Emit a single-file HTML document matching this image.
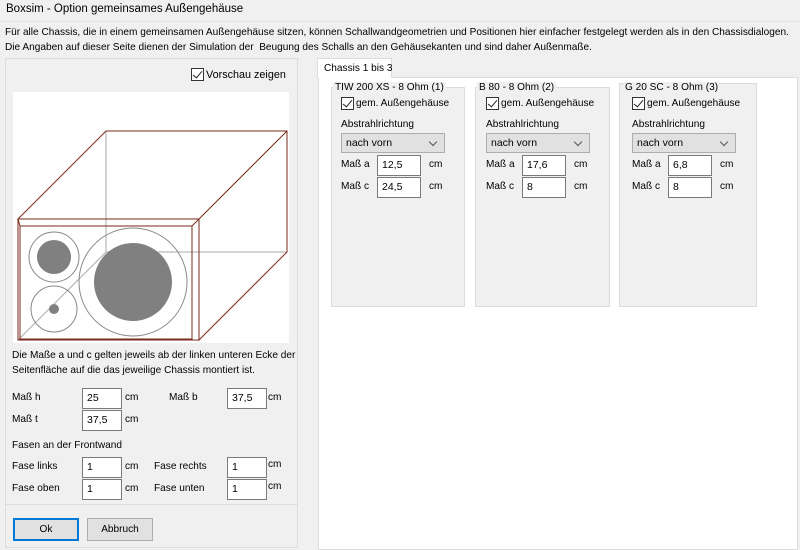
<!DOCTYPE html>
<html><head><meta charset="utf-8"><style>
*{box-sizing:border-box;margin:0;padding:0}
body{width:800px;height:550px;background:#f0f0f0;font-family:"Liberation Sans",sans-serif;font-size:10.1px;color:#000;position:relative;overflow:hidden}
.a{position:absolute;white-space:nowrap}
.in{position:absolute;background:#fff;border:1px solid #7a7a7a;height:21px;padding:3px 4px;font-size:10.5px}
.cb{position:absolute;width:13px;height:13px;border:1px solid #333;background:#fff}
.cb:after{content:"";position:absolute;left:3px;top:0px;width:4px;height:8px;border:solid #222;border-width:0 1.5px 1.5px 0;transform:rotate(40deg)}
.grp{position:absolute;border:1px solid #dcdcdc;background:#f0f0f0}
.sel{position:absolute;background:#e1e1e1;border:1px solid #adadad;height:20px;padding:3px 4px;width:104px;font-size:10.5px}
.sel:after{content:"";position:absolute;right:8px;top:5px;width:5px;height:5px;border:solid #555;border-width:0 1px 1px 0;transform:rotate(45deg)}
.btn{position:absolute;background:#e1e1e1;border:1px solid #adadad;height:23px;text-align:center;line-height:21px}
</style></head><body>
<div class="a" style="left:6px;top:3px;font-size:11.5px">Boxsim - Option gemeinsames Außengehäuse</div>
<div style="position:absolute;left:0;top:21px;width:800px;height:1px;background:#e3e3e3"></div>
<div class="a" style="left:5px;top:27px">Für alle Chassis, die in einem gemeinsamen Außengehäuse sitzen, können Schallwandgeometrien und Positionen hier einfacher festgelegt werden als in den Chassisdialogen.</div>
<div class="a" style="left:5px;top:42px">Die Angaben auf dieser Seite dienen der Simulation der &nbsp;Beugung des Schalls an den Gehäusekanten und sind daher Außenmaße.</div>

<div style="position:absolute;left:5px;top:58px;width:293px;height:447px;border:1px solid #dcdcdc"></div>
<div style="position:absolute;left:5px;top:505px;width:293px;height:43px;border:1px solid #dcdcdc;border-top:none"></div>
<div class="cb" style="left:191px;top:68px"></div>
<div class="a" style="left:206px;top:69px;font-size:10.8px">Vorschau zeigen</div>
<svg style="position:absolute;left:13px;top:92px" width="276" height="251" viewBox="13 92 276 251">
<rect x="13" y="92" width="276" height="251" fill="#fff"/>
<g stroke="#aaa" stroke-width="1" fill="none">
<line x1="106" y1="131" x2="106" y2="252"/><line x1="106" y1="252" x2="287" y2="252"/><line x1="106" y1="252" x2="18" y2="340"/>
</g>
<g stroke="#7a2a1e" stroke-width="1" fill="none">
<polygon points="106,131 287,131 287,252 199,340 199,219 18,219"/>
<line x1="199" y1="219" x2="287" y2="131"/>
<rect x="18" y="219" width="181" height="121"/>
<rect x="20" y="226" width="172" height="113"/>
<line x1="18" y1="219" x2="20" y2="226"/><line x1="199" y1="219" x2="192" y2="226"/>
</g>
<g stroke="#888" fill="none"><circle cx="54" cy="257" r="25"/><circle cx="54" cy="309" r="23"/><circle cx="133" cy="282" r="54"/></g>
<g fill="#808080"><circle cx="54" cy="257" r="17"/><circle cx="54" cy="309" r="5"/><circle cx="133" cy="282" r="39"/></g>
</svg>
<div class="a" style="left:12px;top:350px">Die Maße a und c gelten jeweils ab der linken unteren Ecke der</div>
<div class="a" style="left:12px;top:365px">Seitenfläche auf die das jeweilige Chassis montiert ist.</div>
<div class="a" style="left:12px;top:392px">Maß h</div><div class="in" style="left:82px;top:388px;width:40px">25</div><div class="a" style="left:125px;top:392px">cm</div>
<div class="a" style="left:169px;top:392px">Maß b</div><div class="in" style="left:227px;top:388px;width:40px">37,5</div><div class="a" style="left:268px;top:392px">cm</div>
<div class="a" style="left:12px;top:414px">Maß t</div><div class="in" style="left:82px;top:410px;width:40px">37,5</div><div class="a" style="left:125px;top:414px">cm</div>
<div class="a" style="left:12px;top:440px">Fasen an der Frontwand</div>
<div class="a" style="left:12px;top:461px">Fase links</div><div class="in" style="left:82px;top:457px;width:40px">1</div><div class="a" style="left:125px;top:461px">cm</div>
<div class="a" style="left:154px;top:461px">Fase rechts</div><div class="in" style="left:227px;top:457px;width:40px">1</div><div class="a" style="left:268px;top:459px">cm</div>
<div class="a" style="left:12px;top:483px">Fase oben</div><div class="in" style="left:82px;top:479px;width:40px">1</div><div class="a" style="left:125px;top:483px">cm</div>
<div class="a" style="left:154px;top:483px">Fase unten</div><div class="in" style="left:227px;top:479px;width:40px">1</div><div class="a" style="left:268px;top:481px">cm</div>
<div class="btn" style="left:13px;top:518px;width:66px;border:2px solid #0078d7;line-height:19px">Ok</div>
<div class="btn" style="left:87px;top:518px;width:66px">Abbruch</div>

<div style="position:absolute;left:318px;top:77px;width:480px;height:473px;background:#fff;border:1px solid #dcdcdc"></div>
<div style="position:absolute;left:317px;top:58px;width:75px;height:20px;background:#fff;border:1px solid #dcdcdc;border-bottom:none;padding:4px 6px;white-space:nowrap">Chassis 1 bis 3</div>

<div class="grp" style="left:331px;top:87px;width:134px;height:220px"></div>
<div class="a" style="left:333px;top:82px;background:#f0f0f0;padding:0 2px">TIW 200 XS - 8 Ohm (1)</div>
<div class="cb" style="left:341px;top:97px"></div><div class="a" style="left:356px;top:98px">gem. Außengehäuse</div>
<div class="a" style="left:341px;top:119px">Abstrahlrichtung</div>
<div class="sel" style="left:341px;top:133px">nach vorn</div>
<div class="a" style="left:341px;top:159px">Maß a</div><div class="in" style="left:377px;top:155px;width:44px">12,5</div><div class="a" style="left:429px;top:159px">cm</div>
<div class="a" style="left:341px;top:181px">Maß c</div><div class="in" style="left:377px;top:177px;width:44px">24,5</div><div class="a" style="left:429px;top:181px">cm</div>

<div class="grp" style="left:475px;top:87px;width:135px;height:220px"></div>
<div class="a" style="left:477px;top:82px;background:#f0f0f0;padding:0 2px">B 80 - 8 Ohm (2)</div>
<div class="cb" style="left:486px;top:97px"></div><div class="a" style="left:501px;top:98px">gem. Außengehäuse</div>
<div class="a" style="left:486px;top:119px">Abstrahlrichtung</div>
<div class="sel" style="left:486px;top:133px">nach vorn</div>
<div class="a" style="left:486px;top:159px">Maß a</div><div class="in" style="left:522px;top:155px;width:44px">17,6</div><div class="a" style="left:574px;top:159px">cm</div>
<div class="a" style="left:486px;top:181px">Maß c</div><div class="in" style="left:522px;top:177px;width:44px">8</div><div class="a" style="left:574px;top:181px">cm</div>

<div class="grp" style="left:619px;top:83px;width:138px;height:224px"></div>
<div class="a" style="left:624px;top:82px;background:#f0f0f0;padding:0 1px">G 20 SC - 8 Ohm (3)</div>
<div class="cb" style="left:632px;top:97px"></div><div class="a" style="left:647px;top:98px">gem. Außengehäuse</div>
<div class="a" style="left:632px;top:119px">Abstrahlrichtung</div>
<div class="sel" style="left:632px;top:133px">nach vorn</div>
<div class="a" style="left:632px;top:159px">Maß a</div><div class="in" style="left:668px;top:155px;width:44px">6,8</div><div class="a" style="left:720px;top:159px">cm</div>
<div class="a" style="left:632px;top:181px">Maß c</div><div class="in" style="left:668px;top:177px;width:44px">8</div><div class="a" style="left:720px;top:181px">cm</div>
</body></html>
